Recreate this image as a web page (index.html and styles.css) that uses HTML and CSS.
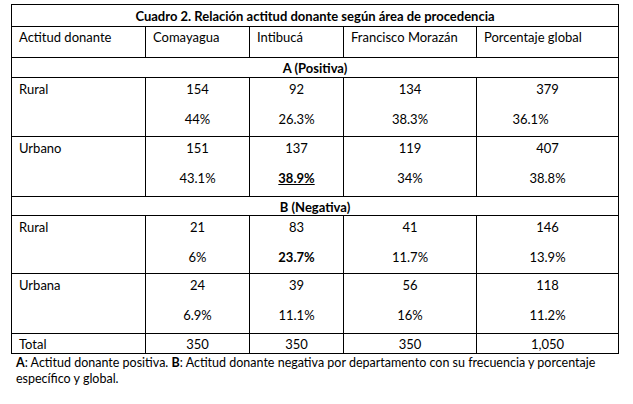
FILE: index.html
```html
<!DOCTYPE html>
<html lang="es">
<head>
<meta charset="utf-8">
<title>Cuadro 2</title>
<link rel="stylesheet" href="styles.css">
</head>
<body>
<div class="page">
  <table class="tbl">
    <colgroup>
      <col class="c1"><col class="c2"><col class="c3"><col class="c4"><col class="c5">
    </colgroup>
    <tr class="r-title"><th colspan="5" class="title">Cuadro 2. Relación actitud donante según área de procedencia</th></tr>
    <tr class="r-head">
      <td>Actitud donante</td><td>Comayagua</td><td>Intibucá</td><td>Francisco Morazán</td><td>Porcentaje global</td>
    </tr>
    <tr class="r-group"><th colspan="5" class="group">A (Positiva)</th></tr>
    <tr class="r-data">
      <td class="label">Rural</td>
      <td class="num"><span class="n">154</span><span class="p">44%</span></td>
      <td class="num"><span class="n">92</span><span class="p">26.3%</span></td>
      <td class="num"><span class="n">134</span><span class="p">38.3%</span></td>
      <td class="num"><span class="n">379</span><span class="p off">36.1%</span></td>
    </tr>
    <tr class="r-data r-tall">
      <td class="label">Urbano</td>
      <td class="num"><span class="n">151</span><span class="p">43.1%</span></td>
      <td class="num"><span class="n">137</span><span class="p"><b class="ul">38.9%</b></span></td>
      <td class="num"><span class="n">119</span><span class="p">34%</span></td>
      <td class="num"><span class="n">407</span><span class="p">38.8%</span></td>
    </tr>
    <tr class="r-group r-groupb"><th colspan="5" class="group">B (Negativa)</th></tr>
    <tr class="r-data r-short">
      <td class="label">Rural</td>
      <td class="num"><span class="n">21</span><span class="p">6%</span></td>
      <td class="num"><span class="n">83</span><span class="p"><b>23.7%</b></span></td>
      <td class="num"><span class="n">41</span><span class="p">11.7%</span></td>
      <td class="num"><span class="n">146</span><span class="p">13.9%</span></td>
    </tr>
    <tr class="r-data r-tall">
      <td class="label">Urbana</td>
      <td class="num"><span class="n">24</span><span class="p">6.9%</span></td>
      <td class="num"><span class="n">39</span><span class="p">11.1%</span></td>
      <td class="num"><span class="n">56</span><span class="p">16%</span></td>
      <td class="num"><span class="n">118</span><span class="p">11.2%</span></td>
    </tr>
    <tr class="r-total">
      <td class="label">Total</td>
      <td class="num">350</td>
      <td class="num">350</td>
      <td class="num">350</td>
      <td class="num">1,050</td>
    </tr>
  </table>
  <p class="note"><b>A</b>: Actitud donante positiva. <b>B</b>: Actitud donante negativa por departamento con su frecuencia y porcentaje<br><span>específico y global.</span></p>
</div>
</body>
</html>
```
FILE: styles.css
```css
html, body {
  margin: 0;
  padding: 0;
  background: #fff;
}
body {
  font-family: "Lato", "Open Sans", sans-serif;
  font-size: 13px;
  color: #000;
}
.page {
  padding: 4px 0 0 11px;
}
.tbl {
  border-collapse: collapse;
  table-layout: fixed;
  width: 607px;
}
.c1 { width: 134px; }
.c2 { width: 104px; }
.c3 { width: 94px; }
.c4 { width: 133px; }
.c5 { width: 142px; }
.tbl th, .tbl td {
  border: 1px solid #000;
  padding: 0 7px;
  vertical-align: top;
  line-height: 16px;
  text-align: left;
  font-weight: normal;
}
.r-title { height: 22px; }
.r-title th { padding-top: 3px; }
.tbl .title, .tbl .group {
  text-align: center;
  font-weight: bold;
}
.r-head { height: 31px; }
.r-head td { padding-top: 2px; }
.r-group { height: 20px; }
.r-group th { padding-top: 2px; }
.r-groupb { height: 19px; }
.r-data { height: 59px; }
.r-tall { height: 60px; }
.r-short { height: 58px; }
.r-data td { padding-top: 3px; }
.tbl td.num { text-align: center; }
.n, .p { display: block; }
.p { margin-top: 14px; }
.p.off { margin-right: 34px; }
.ul { text-decoration: underline; }
.r-total { height: 20px; }
.r-total td { padding-top: 2px; }
.note {
  margin: 1px 0 0 5px;
  width: 610px;
  line-height: 16px;
  font-size: 12.5px;
}
```
